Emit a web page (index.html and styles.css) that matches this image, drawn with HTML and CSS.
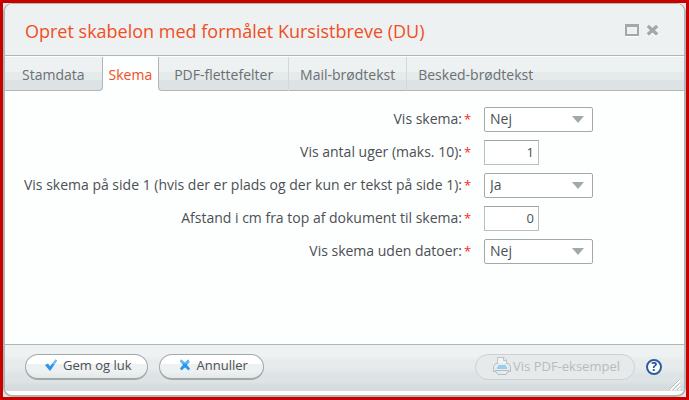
FILE: index.html
```html
<!DOCTYPE html>
<html lang="da">
<head>
  <meta charset="utf-8">
  <title>Opret skabelon</title>
  <link rel="stylesheet" href="styles.css">
</head>
<body>

  <div class="dialog">
    <header class="titlebar">
      <h1>Opret skabelon med formålet Kursistbreve (DU)</h1>
      <div class="window-tools">
        <button type="button" class="tool" aria-label="Maksimer">
          <svg width="14" height="13" viewBox="0 0 14 13">
            <path d="M0 0H14V12H0Z M2 3V10H12V3Z" fill="#a2a9a9" fill-rule="evenodd"/>
            <path d="M0 12.5H14" stroke="#fff"/>
          </svg>
        </button>
        <button type="button" class="tool" aria-label="Luk">
          <svg width="13" height="13" viewBox="0 0 13 13">
            <path d="M2 3L11 11.5M11 3L2 11.5" stroke="#fff" stroke-width="3.4"/>
            <path d="M1.8 2L11.2 10.6M11.2 2L1.8 10.6" stroke="#a2a9a9" stroke-width="3.4"/>
          </svg>
        </button>
      </div>
    </header>

    <nav class="tabs">
      <a href="#" class="tab before-active">Stamdata</a>
      <a href="#" class="tab active">Skema</a>
      <a href="#" class="tab after-active">PDF-flettefelter</a>
      <a href="#" class="tab">Mail-brødtekst</a>
      <a href="#" class="tab last">Besked-brødtekst</a>
      <span class="tab-fill"></span>
    </nav>

    <form class="fields" id="skema">
      <label for="vis">Vis skema:<span class="req">*</span></label>
      <div class="select">
        <select id="vis"><option>Nej</option><option>Ja</option></select>
      </div>

      <label for="uger">Vis antal uger (maks. 10):<span class="req">*</span></label>
      <input type="text" id="uger" value="1">

      <label for="side1">Vis skema på side 1 (hvis der er plads og der kun er tekst på side 1):<span class="req">*</span></label>
      <div class="select">
        <select id="side1"><option>Ja</option><option>Nej</option></select>
      </div>

      <label for="afstand">Afstand i cm fra top af dokument til skema:<span class="req">*</span></label>
      <input type="text" id="afstand" value="0">

      <label for="datoer">Vis skema uden datoer:<span class="req">*</span></label>
      <div class="select">
        <select id="datoer"><option>Nej</option><option>Ja</option></select>
      </div>
    </form>

    <footer class="actions">
      <button type="submit" form="skema" class="btn">
        <svg width="12" height="12" viewBox="0 0 12 12">
          <path d="M0 6L3 4.6L5 7.2L10.6 0.6L12 1.6L5.6 11.6H4.4Z" fill="#2f95ea"/>
          <path d="M7 5L10.6 0.6L12 1.6L9.4 5.6Z" fill="#6fc0f5"/>
        </svg>
        Gem og luk
      </button>
      <button type="button" class="btn cancel">
        <svg width="12" height="12" viewBox="0 0 12 12">
          <path d="M2 0.5L5.8 3.6L9.5 0.5L10.5 3L8 6L11 9.5L9.6 11.5L6 8.4L2.4 11.5L1 9.2L4 6L1.2 2.6Z" fill="#2f95ea"/>
          <path d="M2 0.5L5.8 3.6L9.5 0.5L10.5 3L9 4.8H3L1.2 2.6Z" fill="#62b9f4"/>
        </svg>
        Annuller
      </button>
      <button type="button" class="btn preview" disabled>
        <svg width="18" height="18" viewBox="0 0 18 18">
          <path d="M4.5 8.5V0.5H11L13.5 3V8.5" fill="#eef3f5" stroke="#bcc3c5"/>
          <path d="M10.5 0.5V3.5H13.5" fill="none" stroke="#bcc3c5"/>
          <path d="M4.5 6.5H2.5L0.5 9.5V14.5H3L5 17.5H13L15 14.5H17.5V9.5L15.5 6.5H13.5" fill="#e7ebec" stroke="#b6bdbf"/>
          <path d="M5 8H13V10H14V12H4V10H5Z" fill="#96cff5"/>
          <path d="M2 13.5H16" stroke="#b6bdbf"/>
        </svg>
        Vis PDF-eksempel
      </button>
      <button type="button" class="help" aria-label="Hjælp">?</button>
      <svg class="grip" width="12" height="12" viewBox="0 0 12 12">
        <path d="M1 11L11 1M5 11L11 5M9 11L11 9" stroke="#fff" stroke-width="2"/>
        <path d="M0 11L10.5 0.5M4 11L10.5 4.5M8 11L10.5 8.5" stroke="#b5bbbc"/>
      </svg>
    </footer>
  </div>

</body>
</html>
```

FILE: styles.css
```css
* {
  box-sizing: border-box;
}

body {
  margin: 0;
  height: 100vh;
  display: flex;
  border: 3px solid #c80000;
  background: #e4e8e8;
  font-family: "Trebuchet MS", "Open Sans", sans-serif;
  font-size: 14px;
  color: #4b5054;
}

button,
input,
select {
  font: inherit;
  color: inherit;
}

.dialog {
  flex: 1;
  display: flex;
  flex-direction: column;
  border: 2px solid #b0b6b6;
  border-top-width: 1px;
  border-radius: 9px;
  background: #fdfefe;
  overflow: hidden;
}

/* title bar */
.titlebar {
  display: flex;
  align-items: center;
  justify-content: space-between;
  height: 52px;
  padding: 2px 25px 0 20px;
  border-bottom: 1px solid #b0b6b6;
  background: #edf1f2;
}

.titlebar h1 {
  margin: 0;
  font-size: 18px;
  font-weight: 400;
  color: #f04e23;
}

.window-tools {
  display: flex;
  gap: 7px;
}

.tool {
  display: flex;
  padding: 0;
  border: 0;
  background: none;
}

/* tabs */
.tabs {
  display: flex;
  height: 35px;
  padding-top: 1px;
}

.tab,
.tab-fill {
  background: linear-gradient(#edf1f2 0 45%, #e5eaeb 45% 70%, #dde3e4 70%);
  border-bottom: 1px solid #b0b6b6;
}

.tab {
  padding: 0 11px;
  border-right: 1px solid #d3d9da;
  line-height: 36px;
  color: #6b7074;
  text-decoration: none;
  white-space: nowrap;
}

.before-active {
  padding: 0 17px;
  border-right-color: #b0b6b6;
  border-bottom-right-radius: 4px;
}

.tab.active {
  padding: 0 6px;
  border: 0;
  background: none;
  color: #f04e23;
}

.after-active {
  padding: 0 15px;
  border-left: 1px solid #b0b6b6;
  border-bottom-left-radius: 4px;
}

.tab.last {
  border-right: 0;
}

.tab-fill {
  flex: 1;
}

/* form */
.fields {
  flex: 1;
  display: grid;
  grid-template-columns: 445px 1fr;
  grid-auto-rows: 25px;
  align-content: start;
  gap: 8px 14px;
  padding: 16px 20px;
}

.fields label {
  display: flex;
  justify-content: flex-end;
  line-height: 24px;
  white-space: nowrap;
}

.req {
  width: 8px;
  padding-left: 2px;
  font-size: 13px;
  color: #f0282d;
}

.fields input {
  width: 55px;
  padding: 0 4px 1px;
  border: 1px solid #b9bebe;
  border-top-color: #9ea4a4;
  background: #fff;
  font-size: 13px;
  text-align: right;
}

.select {
  position: relative;
  width: 109px;
}

.select select {
  width: 100%;
  height: 25px;
  padding: 0 5px 2px;
  border: 1px solid #a2a9a9;
  border-radius: 2px;
  background: #fff;
  appearance: none;
}

.select::after {
  content: "";
  position: absolute;
  top: 9px;
  right: 9px;
  border: 6px solid transparent;
  border-top: 7px solid #a2a9a9;
  border-bottom: 0;
  pointer-events: none;
}

/* footer */
.actions {
  position: relative;
  display: flex;
  align-items: center;
  gap: 11px;
  height: 47px;
  margin-bottom: 4px;
  padding: 0 22px 2px 20px;
  border-top: 1px solid #b0b6b6;
  background: linear-gradient(#eff2f3 0 22%, #e7ebec 35% 50%, #dee3e5 65% 80%, #d6dcde 90%);
}

.btn {
  display: flex;
  align-items: center;
  gap: 6px;
  height: 26px;
  padding: 0 15px 3px 19px;
  border: 1px solid #a2a9a9;
  border-bottom-width: 2px;
  border-radius: 13px;
  background: linear-gradient(#fff 0 38%, #eef1f2 38% 70%, #e4e8e9);
  font-size: 13px;
  white-space: nowrap;
}

.preview {
  gap: 2px;
  margin-left: auto;
  padding: 0 14px 2px 17px;
  border: 1px solid #ccd2d3;
  background: #e6eaeb;
  color: #b6bcbe;
}

.help {
  width: 16px;
  height: 16px;
  padding: 0;
  border: 2px solid #2b5f9e;
  border-radius: 50%;
  background: #fff;
  color: #1d4f91;
  font-size: 12px;
  font-weight: 700;
  line-height: 12px;
}

.grip {
  position: absolute;
  right: 3px;
  bottom: 0;
}
```
